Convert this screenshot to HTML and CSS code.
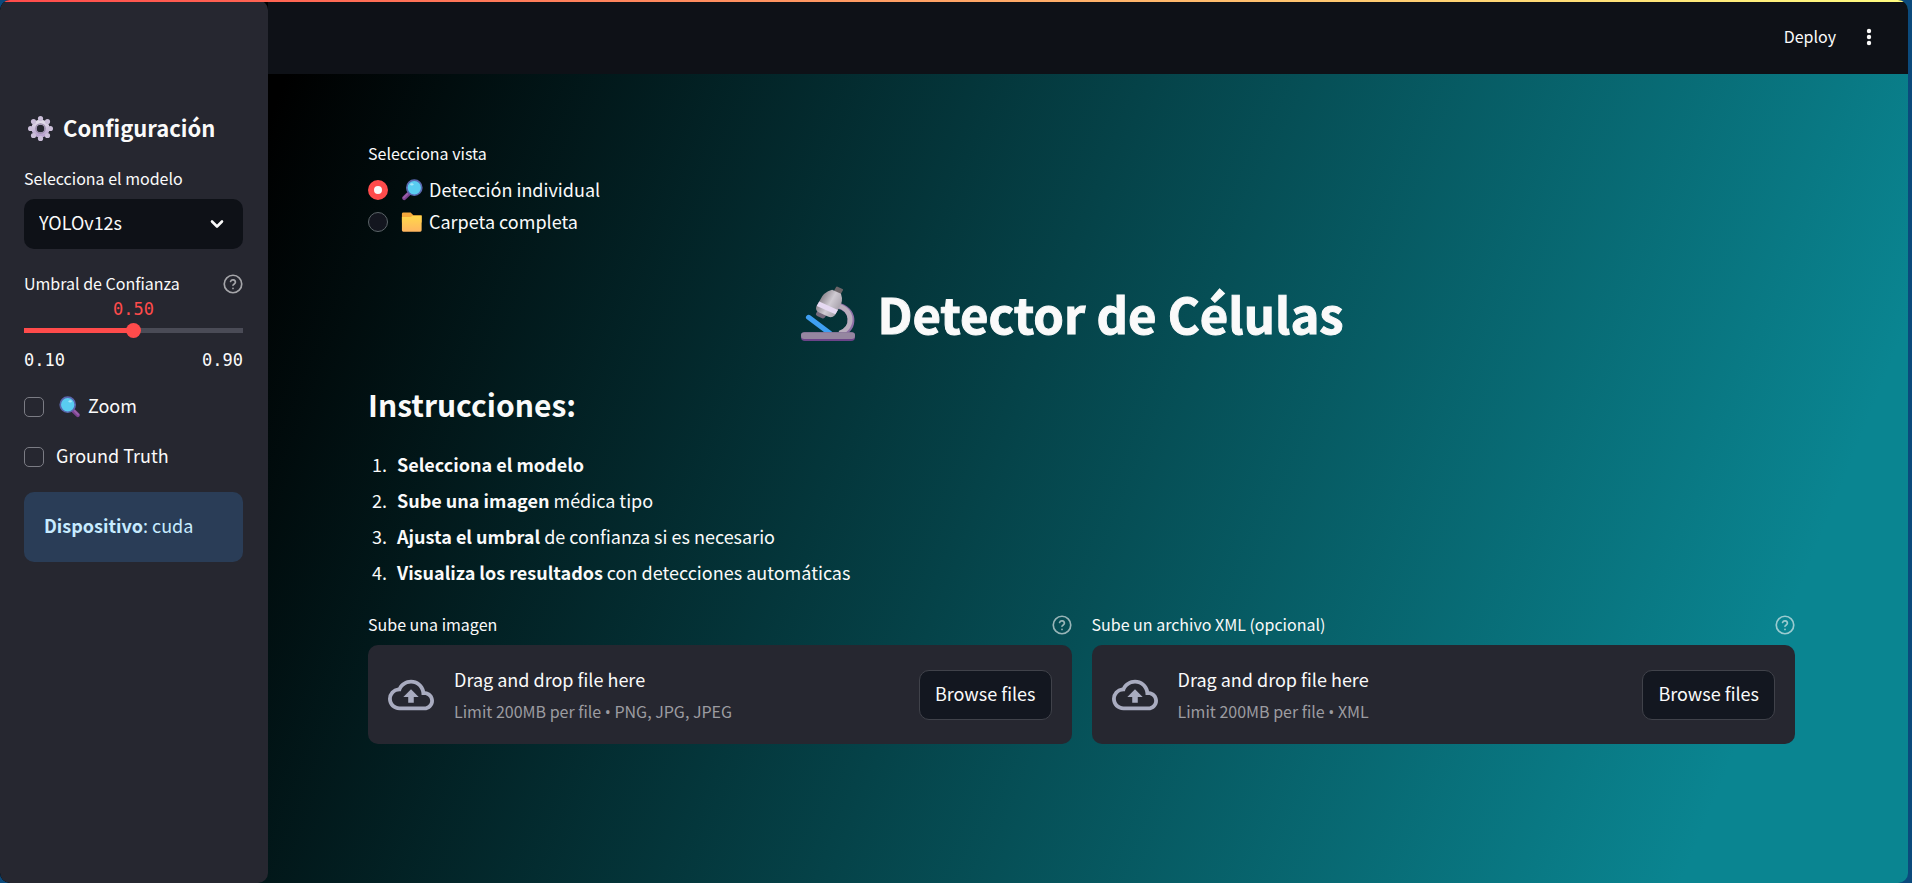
FILE: index.html
```html
<!DOCTYPE html>
<html lang="es">
<head>
<meta charset="utf-8">
<meta name="viewport" content="width=device-width, initial-scale=1">
<title>Detector de Células</title>
<link rel="stylesheet" href="styles.css">
</head>
<body>
<svg class="sprite" aria-hidden="true">
  <defs>
    <linearGradient id="gLilac" x1="0" y1="0" x2="0" y2="1"><stop offset="0" stop-color="#e2dce9"/><stop offset="1" stop-color="#b9a3cf"/></linearGradient>
    <linearGradient id="gFolder" x1="0" y1="0" x2="0" y2="1"><stop offset="0" stop-color="#ffd84a"/><stop offset="1" stop-color="#ffb560"/></linearGradient>
    <linearGradient id="gTube" x1="0" y1="0" x2="1" y2="0"><stop offset="0" stop-color="#8f8890"/><stop offset=".5" stop-color="#cfcad2"/><stop offset="1" stop-color="#a9a3ad"/></linearGradient>
  </defs>
  <symbol id="help" viewBox="0 0 24 24"><g fill="none" stroke="currentColor" stroke-width="2" stroke-linecap="round" stroke-linejoin="round"><circle cx="12" cy="12" r="10.5"/><path d="M9.1 9a3 3 0 0 1 5.8 1c0 2-2.9 2.4-2.9 3.6"/><path d="M12 17.2v.1"/></g></symbol>
  <symbol id="cloud" viewBox="0 0 24 24"><path fill="currentColor" d="M19.35 10.04A7.49 7.49 0 0 0 12 4C9.11 4 6.6 5.64 5.35 8.04A5.994 5.994 0 0 0 0 14c0 3.31 2.69 6 6 6h13c2.76 0 5-2.24 5-5 0-2.64-2.05-4.78-4.65-4.96zM19 18H6c-2.21 0-4-1.79-4-4s1.79-4 4-4h.71C7.37 7.69 9.48 6 12 6c3.04 0 5.5 2.46 5.5 5.5v.5H19c1.66 0 3 1.34 3 3s-1.34 3-3 3zM8 13h2.55v3h2.9v-3H16l-4-4z"/></symbol>
  <symbol id="lens" viewBox="0 0 24 24"><path d="M14.5 15l6 5.700" stroke="#7d4391" stroke-width="4.600" stroke-linecap="round"/><path d="M17 16.300l4 4" stroke="#995fa8" stroke-width="2" stroke-linecap="round"/><circle cx="9.500" cy="9.500" r="8.200" fill="#59cdf1" stroke="#5a67ae" stroke-width="1.800"/><ellipse cx="12.200" cy="5.800" rx="1.800" ry="1.300" fill="#a4e6fa"/></symbol>
</svg>
<div class="app">
  <div class="rainbow"></div>
  <aside class="sidebar">
    <h2 class="side-title">
      <svg class="gear" viewBox="0 0 24 24" aria-hidden="true"><g stroke="url(#gLilac)" fill="none"><circle cx="12" cy="12" r="6.200" stroke-width="5"/></g><g fill="#cbbfd9"><circle cx="12" cy="2.500" r="2.500"/><circle cx="18.700" cy="5.300" r="2.500"/><circle cx="21.500" cy="12" r="2.500"/><circle cx="18.700" cy="18.700" r="2.500"/><circle cx="12" cy="21.500" r="2.500"/><circle cx="5.300" cy="18.700" r="2.500"/><circle cx="2.500" cy="12" r="2.500"/><circle cx="5.300" cy="5.300" r="2.500"/></g><circle cx="12" cy="12" r="4.500" fill="none" stroke="#978aa8" stroke-width="1.200"/></svg>
      <span>Configuración</span>
    </h2>
    <label class="label" for="model">Selecciona el modelo</label>
    <div class="select-wrap">
      <select id="model" class="select"><option>YOLOv12s</option></select>
      <svg class="chevron" viewBox="0 0 14 10" aria-hidden="true"><path d="M2 2.500l5 5 5-5" fill="none" stroke="#fafafa" stroke-width="2.600" stroke-linecap="round" stroke-linejoin="round"/></svg>
    </div>
    <div class="label-row slider-label">
      <label class="label" for="conf">Umbral de Confianza</label>
      <svg class="help"><use href="#help"/></svg>
    </div>
    <output class="slider-value" for="conf">0.50</output>
    <input id="conf" class="slider" type="range" min="0.1" max="0.9" step="0.01" value="0.5">
    <div class="slider-ends"><span>0.10</span><span>0.90</span></div>
    <label class="check"><input type="checkbox"><svg class="emoji" aria-hidden="true"><use href="#lens"/></svg><span>Zoom</span></label>
    <label class="check"><input type="checkbox"><span>Ground Truth</span></label>
    <div class="info"><strong>Dispositivo</strong>: cuda</div>
  </aside>
  <div class="content">
    <header class="header">
      <button class="deploy" type="button">Deploy</button>
      <button class="more" type="button" aria-label="Menu"><svg viewBox="0 0 6 18"><g fill="#fafafa"><circle cx="3" cy="3" r="2.200"/><circle cx="3" cy="9" r="2.200"/><circle cx="3" cy="15" r="2.200"/></g></svg></button>
    </header>
    <main class="main">
      <fieldset class="views">
        <legend class="label">Selecciona vista</legend>
        <label class="radio"><input type="radio" name="view" checked><svg class="emoji flip" aria-hidden="true"><use href="#lens"/></svg><span>Detección individual</span></label>
        <label class="radio"><input type="radio" name="view"><svg class="emoji" viewBox="0 0 24 24" aria-hidden="true"><path d="M1 3A1.500 1.500 0 0 1 2.500 1.500H10.500l3 3h9v8H1z" fill="#f5a93c"/><path d="M1 6.500h9.500l2.500-1.300h9.500V21a1.500 1.500 0 0 1-1.500 1.500h-18.500A1.500 1.500 0 0 1 1 21z" fill="url(#gFolder)"/></svg><span>Carpeta completa</span></label>
      </fieldset>
      <h1 class="title">
        <svg class="scope" viewBox="3 0 49 57" preserveAspectRatio="none" aria-hidden="true">
          <path d="M36 21c15 3 17 23 3 29" fill="none" stroke="#8d6fa6" stroke-width="6"/>
          <path d="M36 21c14 3 16 22 2 28" fill="none" stroke="#b9adbd" stroke-width="4.500"/>
          <path d="M10 33l19 16" stroke="#3f9ff2" stroke-width="5" stroke-linecap="round"/>
          <g transform="rotate(27 28 20)"><rect x="26" y="0" width="7" height="8" rx="1" fill="#6b6468"/><rect x="22" y="28" width="9" height="7" rx="2" fill="#75697c"/><path d="M24 5h9q6 6 5 14v8q-1 4-5 4h-9q-4 0-5-4v-8q-1-8 5-14z" fill="url(#gTube)"/><path d="M19 21h19v5h-19z" fill="#e6d9f2"/></g>
          <rect x="3" y="48" width="49" height="9" rx="3.500" fill="#6c4489"/><rect x="3" y="48" width="49" height="7" rx="3" fill="#9586a0"/>
        </svg>
        <span>Detector de Células</span>
      </h1>
      <h2 class="subtitle">Instrucciones:</h2>
      <ol class="steps">
        <li><strong>Selecciona el modelo</strong></li>
        <li><strong>Sube una imagen</strong> médica tipo</li>
        <li><strong>Ajusta el umbral</strong> de confianza si es necesario</li>
        <li><strong>Visualiza los resultados</strong> con detecciones automáticas</li>
      </ol>
      <div class="uploads">
        <section class="upload">
          <div class="label-row"><span class="label">Sube una imagen</span><svg class="help"><use href="#help"/></svg></div>
          <div class="drop">
            <svg class="cloud" aria-hidden="true"><use href="#cloud"/></svg>
            <div class="drop-text"><span>Drag and drop file here</span><small>Limit 200MB per file <span class="dot">•</span> PNG, JPG, JPEG</small></div>
            <button class="browse" type="button">Browse files</button>
          </div>
        </section>
        <section class="upload">
          <div class="label-row"><span class="label">Sube un archivo XML (opcional)</span><svg class="help"><use href="#help"/></svg></div>
          <div class="drop">
            <svg class="cloud" aria-hidden="true"><use href="#cloud"/></svg>
            <div class="drop-text"><span>Drag and drop file here</span><small>Limit 200MB per file <span class="dot">•</span> XML</small></div>
            <button class="browse" type="button">Browse files</button>
          </div>
        </section>
      </div>
    </main>
  </div>
</div>
</body>
</html>
```
FILE: styles.css
```css
* { box-sizing: border-box; }
html, body { margin: 0; min-height: 100vh; }
body {
  background: #0b4a7c;
  color: #fafafa;
  font: 18px/30px "Noto Sans CJK SC", "Noto Sans", sans-serif;
}
button, select, input { font: inherit; color: inherit; }
.sprite { position: absolute; width: 0; height: 0; }
.app {
  position: relative;
  display: flex;
  min-height: 100vh;
  margin-right: 4px;
  border-radius: 10px;
  overflow: hidden;
  background: linear-gradient(112deg, #000 14%, #0a8591 90%);
}
.rainbow {
  position: absolute;
  inset: 0 0 auto;
  height: 2px;
  background: linear-gradient(90deg, #ff4b4b, #fffd80);
}
.sidebar {
  flex: 0 0 268px;
  padding: 112px 25px 24px 24px;
  background: #262730;
  border-radius: 10px;
}
.side-title {
  display: flex;
  align-items: center;
  gap: 10px;
  margin: 0 0 20px;
  padding-left: 4px;
  font-size: 22px;
  line-height: 32px;
  font-weight: 600;
}
.side-title span, .radio span { padding-bottom: 2px; }
.check span { padding-bottom: 4px; }
.side-title span { line-height: 30px; }
.gear { width: 25px; height: 25px; }
.label { display: block; padding-bottom: 2px; font-size: 16px; line-height: 28px; }
.select-wrap { position: relative; margin-top: 5px; }
.select {
  display: block;
  width: 100%;
  height: 50px;
  padding: 0 15px 4px;
  border: 0;
  border-radius: 10px;
  background: #0e1117;
  appearance: none;
}
.chevron { position: absolute; right: 19px; top: 20px; width: 14px; height: 10px; pointer-events: none; }
.label-row { display: flex; justify-content: space-between; align-items: center; }
.help { width: 20px; height: 20px; color: #fafafa; opacity: 0.6; }
.slider-label { margin-top: 20px; }
.slider-value, .slider-ends { font: 17px/24px "DejaVu Sans Mono", monospace; }
.slider-value {
  display: block;
  text-align: center;
  line-height: 20px;
  color: #ff4b4b;
}
.slider {
  display: block;
  width: 100%;
  height: 15px;
  margin: 4px 0 0;
  background: linear-gradient(90deg, #ff4b4b 50%, #4a4b56 50%) center / 100% 5px no-repeat;
  border-radius: 3px;
  appearance: none;
}
.slider::-webkit-slider-thumb { appearance: none; width: 15px; height: 15px; border-radius: 50%; background: #ff4b4b; }
.slider-ends {
  display: flex;
  justify-content: space-between;
  margin: 10px 0 20px;
}
.check { display: flex; align-items: center; gap: 12px; height: 30px; margin-bottom: 20px; }
.check input {
  width: 20px;
  height: 20px;
  margin: 0;
  border: 1px solid #7b7c84;
  border-radius: 5px;
  appearance: none;
}
.emoji { width: 22px; height: 22px; flex: none; }
.check .emoji { margin: 0 -5px 0 3px; }
.flip { transform: scaleX(-1); }
.info {
  padding: 18px 20px 22px;
  border-radius: 10px;
  background: #2a3d57;
  color: #c7ebff;
}
strong { font-weight: 600; }
.content { flex: 1; min-width: 0; }
.header {
  display: flex;
  justify-content: flex-end;
  align-items: center;
  gap: 28px;
  height: 74px;
  padding-right: 34px;
  background: #0e1117;
}
.deploy, .more { padding: 0; border: 0; background: none; font-size: 16px; }
.deploy { padding-bottom: 2px; }
.more { display: flex; width: 10px; justify-content: center; }
.more svg { width: 6px; height: 18px; }
.main { padding: 65px 113px 40px 100px; }
.views { margin: 0; padding: 0; border: 0; }
.views .label { padding: 0 0 2px; margin-bottom: 5px; }
.radio { display: flex; align-items: center; height: 32px; }
.radio input {
  width: 20px;
  height: 20px;
  margin: 0 13px 0 0;
  border: 1px solid #5b6468;
  border-radius: 50%;
  background: #13161f;
  appearance: none;
}
.radio input:checked { border: 6px solid #ff4b4b; background: #fafafa; }
.radio .emoji { margin-right: 6px; }
.title {
  display: flex;
  justify-content: center;
  align-items: center;
  gap: 22px;
  margin: 42px 0 0;
  padding-right: 18px;
  font-size: 49px;
  line-height: 66px;
  font-weight: 700;
  -webkit-text-stroke: 1px #fafafa;
}
.scope { width: 54px; height: 56px; }
.subtitle { margin: 37px 0 0; font-size: 30px; line-height: 42px; font-weight: 600; }
.steps { margin: 21px 0 0; padding-left: 23px; line-height: 36px; }
.steps li { padding-left: 6px; }
.uploads { display: grid; grid-template-columns: 1fr 1fr; gap: 20px; margin-top: 20px; }
.drop {
  display: flex;
  align-items: center;
  margin-top: 5px;
  padding: 17px 20px;
  border-radius: 10px;
  background: #262730;
}
.cloud { width: 46px; height: 46px; margin-right: 20px; color: #a9acc0; }
.drop-text { display: flex; flex: 1; flex-direction: column; gap: 2px; padding-top: 2px; }
.drop-text small { font-size: 16px; line-height: 30px; color: #9c9ca1; }
.dot { font-family: "Open Sans", sans-serif; }
.browse {
  height: 50px;
  padding: 0 15px 4px;
  border: 1px solid #40424a;
  border-radius: 10px;
  background: #131720;
}
```
